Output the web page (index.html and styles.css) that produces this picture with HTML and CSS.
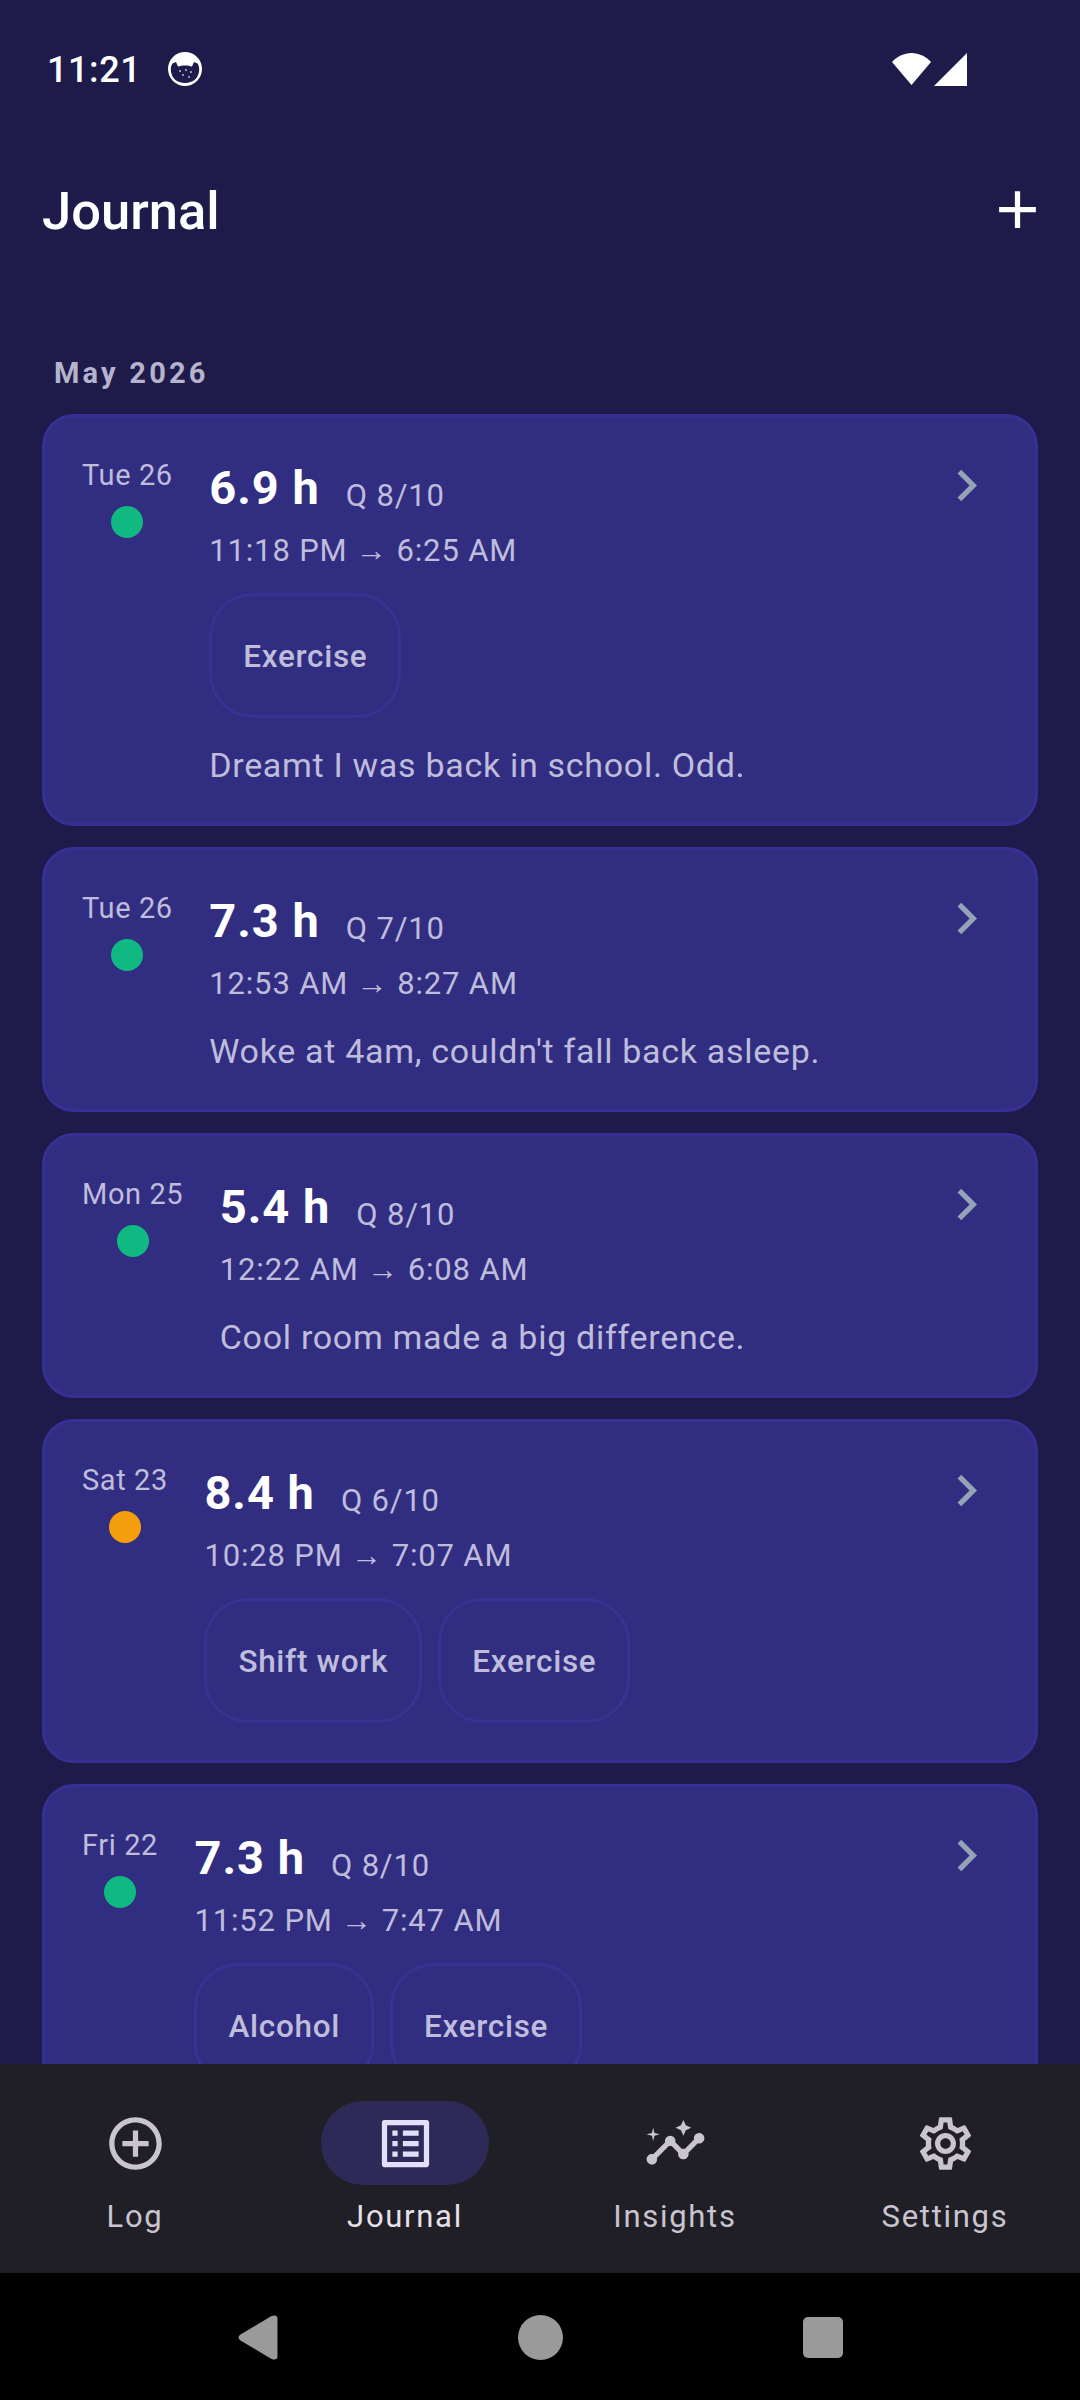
FILE: index.html
```html
<!DOCTYPE html>
<html lang="en">
<head>
    <meta charset="UTF-8">
    <meta name="viewport" content="width=device-width, initial-scale=1.0">
    <title>Journal</title>
    <link rel="stylesheet" href="styles.css">
</head>
<body>
    <div class="screen">
        <!-- Status bar -->
        <div class="status-bar">
            <span class="status-time">11:21</span>
            <svg class="status-cat" viewBox="0 0 34 34">
                <circle cx="17" cy="17" r="17" fill="#fff"/>
                <path d="M2.8 17 C2.8 26 9 31 17 31 C25 31 31.2 26 31.2 17 C31.2 15 30.5 13 29.5 11.5 L26 10 L24 14.5 C20 13 14 13 10 14.5 L8 10 L4.5 11.5 C3.5 13 2.8 15 2.8 17 Z" fill="#1e1b4b"/>
                <g fill="#fff" opacity="0.7">
                    <circle cx="12" cy="19" r="1"/>
                    <circle cx="18" cy="18" r="1"/>
                    <circle cx="23" cy="20" r="1"/>
                    <circle cx="15" cy="23" r="1"/>
                    <circle cx="21" cy="25" r="1"/>
                </g>
            </svg>
            <span class="status-spacer"></span>
            <svg class="status-wifi" viewBox="0 0 39 32">
                <path d="M19.5 32 L0 9 C5 3.5 12 0 19.5 0 C27 0 34 3.5 39 9 Z" fill="#fff"/>
            </svg>
            <svg class="status-signal" viewBox="0 0 33 33">
                <path d="M33 0 V33 H0 Z" fill="#fff"/>
            </svg>
        </div>

        <!-- Header -->
        <div class="app-header">
            <h1 class="app-title">Journal</h1>
            <svg class="add-icon" viewBox="0 0 24 24"><path d="M19 13h-6v6h-2v-6H5v-2h6V5h2v6h6v2z"/></svg>
        </div>

        <!-- Entries -->
        <div class="content">
            <div class="month-label">May 2026</div>

            <div class="card">
                <div class="date-col">
                    <span class="date-text">Tue 26</span>
                    <span class="dot green"></span>
                </div>
                <div class="entry-main">
                    <div class="entry-top">
                        <span class="duration">6.9 h</span>
                        <span class="quality">Q 8/10</span>
                    </div>
                    <div class="times">11:18 PM <span class="arrow">→</span> 6:25 AM</div>
                    <div class="chips">
                        <span class="chip">Exercise</span>
                    </div>
                    <div class="note">Dreamt I was back in school. Odd.</div>
                </div>
                <svg class="chevron" viewBox="0 0 24 24"><path d="M10 6 8.59 7.41 13.17 12l-4.58 4.59L10 18l6-6z"/></svg>
            </div>

            <div class="card">
                <div class="date-col">
                    <span class="date-text">Tue 26</span>
                    <span class="dot green"></span>
                </div>
                <div class="entry-main">
                    <div class="entry-top">
                        <span class="duration">7.3 h</span>
                        <span class="quality">Q 7/10</span>
                    </div>
                    <div class="times">12:53 AM <span class="arrow">→</span> 8:27 AM</div>
                    <div class="note">Woke at 4am, couldn't fall back asleep.</div>
                </div>
                <svg class="chevron" viewBox="0 0 24 24"><path d="M10 6 8.59 7.41 13.17 12l-4.58 4.59L10 18l6-6z"/></svg>
            </div>

            <div class="card">
                <div class="date-col">
                    <span class="date-text">Mon 25</span>
                    <span class="dot green"></span>
                </div>
                <div class="entry-main">
                    <div class="entry-top">
                        <span class="duration">5.4 h</span>
                        <span class="quality">Q 8/10</span>
                    </div>
                    <div class="times">12:22 AM <span class="arrow">→</span> 6:08 AM</div>
                    <div class="note">Cool room made a big difference.</div>
                </div>
                <svg class="chevron" viewBox="0 0 24 24"><path d="M10 6 8.59 7.41 13.17 12l-4.58 4.59L10 18l6-6z"/></svg>
            </div>

            <div class="card">
                <div class="date-col">
                    <span class="date-text">Sat 23</span>
                    <span class="dot orange"></span>
                </div>
                <div class="entry-main">
                    <div class="entry-top">
                        <span class="duration">8.4 h</span>
                        <span class="quality">Q 6/10</span>
                    </div>
                    <div class="times">10:28 PM <span class="arrow">→</span> 7:07 AM</div>
                    <div class="chips">
                        <span class="chip">Shift work</span>
                        <span class="chip">Exercise</span>
                    </div>
                </div>
                <svg class="chevron" viewBox="0 0 24 24"><path d="M10 6 8.59 7.41 13.17 12l-4.58 4.59L10 18l6-6z"/></svg>
            </div>

            <div class="card">
                <div class="date-col">
                    <span class="date-text">Fri 22</span>
                    <span class="dot green"></span>
                </div>
                <div class="entry-main">
                    <div class="entry-top">
                        <span class="duration">7.3 h</span>
                        <span class="quality">Q 8/10</span>
                    </div>
                    <div class="times">11:52 PM <span class="arrow">→</span> 7:47 AM</div>
                    <div class="chips">
                        <span class="chip">Alcohol</span>
                        <span class="chip">Exercise</span>
                    </div>
                </div>
                <svg class="chevron" viewBox="0 0 24 24"><path d="M10 6 8.59 7.41 13.17 12l-4.58 4.59L10 18l6-6z"/></svg>
            </div>
        </div>

        <!-- Bottom navigation -->
        <nav class="bottom-nav">
            <div class="nav-item">
                <div class="nav-pill">
                    <svg class="nav-icon" viewBox="0 0 24 24"><path d="M13 7h-2v4H7v2h4v4h2v-4h4v-2h-4V7zm-1-5C6.48 2 2 6.48 2 12s4.48 10 10 10 10-4.48 10-10S17.52 2 12 2zm0 18c-4.41 0-8-3.59-8-8s3.59-8 8-8 8 3.59 8 8-3.59 8-8 8z"/></svg>
                </div>
                <span class="nav-label">Log</span>
            </div>
            <div class="nav-item active">
                <div class="nav-pill">
                    <svg class="nav-icon" viewBox="0 0 24 24"><path d="M19 5v14H5V5h14m1.1-2H3.9c-.5 0-.9.4-.9.9v16.2c0 .4.4.9.9.9h16.2c.4 0 .9-.5.9-.9V3.9c0-.5-.5-.9-.9-.9zM11 7h6v2h-6V7zm0 4h6v2h-6v-2zm0 4h6v2h-6v-2zM7 7h2v2H7V7zm0 4h2v2H7v-2zm0 4h2v2H7v-2z"/></svg>
                </div>
                <span class="nav-label">Journal</span>
            </div>
            <div class="nav-item">
                <div class="nav-pill">
                    <svg class="nav-icon" viewBox="0 0 24 24">
                        <path d="M21 8c-1.45 0-2.26 1.44-1.93 2.51l-3.55 3.56c-.3-.09-.74-.09-1.04 0l-2.55-2.55C12.27 10.45 11.46 9 10 9c-1.45 0-2.27 1.44-1.93 2.52l-4.56 4.55C2.44 15.74 1 16.55 1 18c0 1.1.9 2 2 2 1.45 0 2.26-1.44 1.93-2.51l4.55-4.56c.3.09.74.09 1.04 0l2.55 2.55C12.73 16.55 13.54 18 15 18c1.45 0 2.27-1.44 1.93-2.52l3.56-3.55c1.07.33 2.51-.48 2.51-1.93 0-1.1-.9-2-2-2z"/>
                        <path d="M15 9l.94-2.07L18 6l-2.06-.93L15 3l-.92 2.07L12 6l2.08.93z"/>
                        <path d="M3.5 11L4 9l2-.5L4 8l-.5-2L3 8l-2 .5L3 9z"/>
                    </svg>
                </div>
                <span class="nav-label">Insights</span>
            </div>
            <div class="nav-item">
                <div class="nav-pill">
                    <svg class="nav-icon" viewBox="0 0 24 24"><path d="M19.43 12.98c.04-.32.07-.64.07-.98 0-.34-.03-.66-.07-.98l2.11-1.65c.19-.15.24-.42.12-.64l-2-3.46c-.09-.16-.26-.25-.44-.25-.06 0-.12.01-.17.03l-2.49 1c-.52-.4-1.08-.73-1.69-.98l-.38-2.65C14.46 2.18 14.25 2 14 2h-4c-.25 0-.46.18-.49.42l-.38 2.65c-.61.25-1.17.59-1.69.98l-2.49-1c-.06-.02-.12-.03-.18-.03-.17 0-.34.09-.43.25l-2 3.46c-.13.22-.07.49.12.64l2.11 1.65c-.04.32-.07.65-.07.98 0 .33.03.66.07.98l-2.11 1.65c-.19.15-.24.42-.12.64l2 3.46c.09.16.26.25.44.25.06 0 .12-.01.17-.03l2.49-1c.52.4 1.08.73 1.69.98l.38 2.65c.03.24.24.42.49.42h4c.25 0 .46-.18.49-.42l.38-2.65c.61-.25 1.17-.59 1.69-.98l2.49 1c.06.02.12.03.18.03.17 0 .34-.09.43-.25l2-3.46c.12-.22.07-.49-.12-.64l-2.11-1.65zm-1.98-1.71c.04.31.05.52.05.73 0 .21-.02.43-.05.73l-.14 1.13.89.7 1.08.84-.7 1.21-1.27-.51-1.04-.42-.9.68c-.43.32-.84.56-1.25.73l-1.06.43-.16 1.13-.2 1.35h-1.4l-.19-1.35-.16-1.13-1.06-.43c-.43-.18-.83-.41-1.23-.71l-.91-.7-1.06.43-1.27.51-.7-1.21 1.08-.84.89-.7-.14-1.13c-.03-.31-.05-.54-.05-.74s.02-.43.05-.73l.14-1.13-.89-.7-1.08-.84.7-1.21 1.27.51 1.04.42.9-.68c.43-.32.84-.56 1.25-.73l1.06-.43.16-1.13.2-1.35h1.39l.19 1.35.16 1.13 1.06.43c.43.18.83.41 1.23.71l.91.7 1.06-.43 1.27-.51.7 1.21-1.07.85-.89.7.14 1.13zM12 8c-2.21 0-4 1.79-4 4s1.79 4 4 4 4-1.79 4-4-1.79-4-4-4zm0 6c-1.1 0-2-.9-2-2s.9-2 2-2 2 .9 2 2-.9 2-2 2z"/></svg>
                </div>
                <span class="nav-label">Settings</span>
            </div>
        </nav>

        <!-- System navigation -->
        <div class="system-nav">
            <svg class="sys-back" viewBox="1 0 39 45"><path d="M3 19.5 L34 1 Q40 -1 40 4 V41 Q40 46 34 44 L3 25.5 Q-1 22.5 3 19.5 Z"/></svg>
            <span class="sys-home"></span>
            <span class="sys-recent"></span>
        </div>
    </div>
</body>
</html>
```

FILE: styles.css
```css
* {
    margin: 0;
    padding: 0;
    box-sizing: border-box;
}

body {
    font-family: 'Roboto', sans-serif;
    background: #1e1b4b;
    color: white;
}

.screen {
    width: 1080px;
    height: 2400px;
    display: flex;
    flex-direction: column;
    overflow: hidden;
}

/* Status bar */
.status-bar {
    height: 138px;
    flex-shrink: 0;
    display: flex;
    align-items: center;
    padding-left: 47px;
    padding-right: 113px;
}

.status-time {
    font-size: 36px;
    font-weight: 500;
    letter-spacing: 0.6px;
    margin-top: 2px;
}

.status-cat {
    width: 34px;
    height: 34px;
    margin-left: 27px;
}

.status-spacer {
    flex: 1;
}

.status-wifi {
    width: 39px;
    height: 32px;
}

.status-signal {
    width: 33px;
    height: 33px;
    margin-left: 3px;
}

/* Header */
.app-header {
    height: 145px;
    flex-shrink: 0;
    display: flex;
    align-items: center;
    justify-content: space-between;
    padding-left: 42px;
    padding-right: 31px;
}

.app-title {
    font-size: 52.5px;
    font-weight: 500;
}

.add-icon {
    width: 63px;
    height: 63px;
    fill: white;
    margin-bottom: 2px;
}

/* Entries */
.content {
    flex: 1;
    min-height: 0;
    overflow: hidden;
    padding: 0 42px;
}

.month-label {
    font-size: 29px;
    font-weight: 700;
    letter-spacing: 3.2px;
    color: #b6b3cc;
    padding-left: 12px;
    padding-top: 73px;
    height: 131px;
    line-height: 34px;
}

.card {
    background: #312e81;
    border: 3px solid #373092;
    border-radius: 32px;
    padding: 40px 37px 36px 37px;
    margin-bottom: 21px;
    display: flex;
    align-items: flex-start;
}

.date-col {
    display: flex;
    flex-direction: column;
    align-items: center;
    margin-right: 36.5px;
}

.date-text {
    font-size: 29px;
    line-height: 36px;
    letter-spacing: 0.6px;
    color: #bfbcdc;
}

.dot {
    width: 32px;
    height: 32px;
    border-radius: 50%;
    margin-top: 13px;
}

.dot.green {
    background: #10b981;
}

.dot.orange {
    background: #f59e0b;
}

.entry-main {
    flex: 1;
    min-width: 0;
}

.entry-top {
    display: flex;
    align-items: flex-start;
    height: 62px;
}

.duration {
    font-size: 47px;
    font-weight: 700;
    line-height: 62px;
    letter-spacing: 1px;
}

.quality {
    font-size: 31px;
    line-height: 40px;
    letter-spacing: 0.8px;
    color: #bfbcdc;
    margin-left: 26px;
    margin-top: 19px;
}

.times {
    font-size: 31px;
    line-height: 40px;
    letter-spacing: 0.85px;
    color: #bfbcdc;
    margin-top: 12px;
}

.arrow {
    font-size: 31px;
}

.chips {
    display: flex;
    gap: 16px;
    margin-top: 22px;
}

.chips:last-child {
    margin-bottom: 1px;
}

.chip {
    height: 125px;
    padding: 2px 31px 0;
    display: flex;
    align-items: center;
    border: 3px solid #383292;
    border-radius: 44px;
    font-size: 31.5px;
    font-weight: 500;
    letter-spacing: 0.7px;
    color: #bfbcdc;
}

.note {
    font-size: 34px;
    line-height: 44px;
    letter-spacing: 0.7px;
    color: #bfbcdc;
    margin-top: 25px;
}

.chevron {
    width: 63px;
    height: 63px;
    flex-shrink: 0;
    fill: #94a3b8;
    margin-top: -3px;
}

/* Bottom navigation */
.bottom-nav {
    height: 209px;
    flex-shrink: 0;
    background: #211f26;
    display: flex;
    padding-top: 37px;
}

.nav-item {
    flex: 1;
    display: flex;
    flex-direction: column;
    align-items: center;
}

.nav-pill {
    width: 168px;
    height: 84px;
    border-radius: 42px;
    display: flex;
    align-items: center;
    justify-content: center;
}

.nav-item.active .nav-pill {
    background: #2d2a58;
}

.nav-icon {
    width: 63px;
    height: 63px;
    fill: #cac4d0;
}

.nav-item.active .nav-icon {
    fill: #e3dffb;
}

.nav-label {
    font-size: 31px;
    line-height: 40px;
    letter-spacing: 1.7px;
    margin-top: 12px;
    color: #cac4d0;
}

.nav-item.active .nav-label {
    color: #e6e0e9;
}

/* System navigation */
.system-nav {
    height: 127px;
    flex-shrink: 0;
    background: #000;
    display: flex;
    justify-content: center;
    align-items: center;
    gap: 240px;
    padding-top: 2px;
}

.sys-back {
    width: 40px;
    height: 45px;
    fill: #9a9a9a;
}

.sys-home {
    width: 45px;
    height: 45px;
    border-radius: 50%;
    background: #9a9a9a;
}

.sys-recent {
    width: 40px;
    height: 41px;
    border-radius: 5px;
    background: #9a9a9a;
}
```
